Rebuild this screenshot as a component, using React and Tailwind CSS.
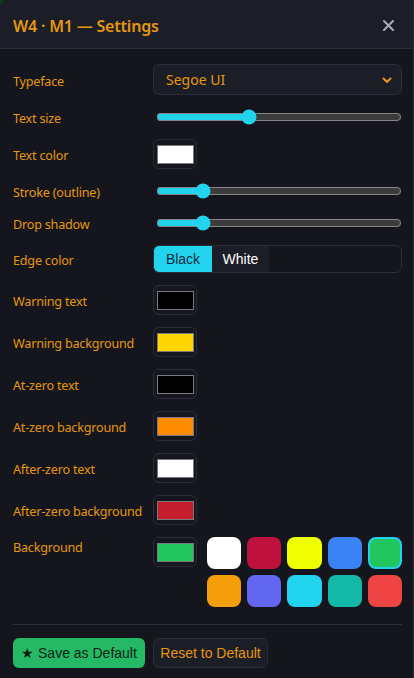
import React, { useState } from 'react';

const colorRows = [
  ['Text color', '#ffffff'],
];

const pickerRows = [
  ['Warning text', '#000000'],
  ['Warning background', '#ffd600'],
  ['At-zero text', '#000000'],
  ['At-zero background', '#ff8c00'],
  ['After-zero text', '#ffffff'],
  ['After-zero background', '#c41e2e'],
];

const swatches = [
  '#ffffff', '#be123c', '#f0ff00', '#3b82f6', '#22c55e',
  '#f59e0b', '#6366f1', '#22d3ee', '#14b8a6', '#ef4444',
];

const ColorBox = ({ color }) => (
  <div className="w-[44px] h-[30px] rounded-md border border-[#2a2d38] bg-[#16171e] flex items-center justify-center">
    <div className="w-[37px] h-[19px] border border-[#7a7a7a]" style={{ background: color }} />
  </div>
);

const Label = ({ children, top }) => (
  <div className={`text-[12.6px] leading-[14px] tracking-[-0.2px] text-[#e6960f] ${top ? 'self-start pt-[4px]' : 'pt-[4px]'}`}>{children}</div>
);

const Slider = ({ value }) => (
  <div className="h-[20px] flex items-center pl-[3px]">
    <input
      type="range"
      min="0"
      max="100"
      defaultValue={value}
      className="w-full accent-[#22d3ee] m-0"
    />
  </div>
);

export default function App() {
  const [edge, setEdge] = useState('black');
  const [bg, setBg] = useState('#22c55e');

  return (
    <div className="min-h-[678px] bg-[#0f3a1e]" style={{ fontFamily: '"Noto Sans", "Open Sans", sans-serif' }}>
      <div className="w-[414px] h-[678px] rounded-tl-lg border-r border-[#2a2d38] bg-[#15161d] overflow-hidden">
        {/* header */}
        <div className="h-[49px] flex items-center justify-between pl-[13px] pr-[19px] pt-[3px] bg-[#1b1e27] border-b border-[#2c303b]">
          <h2 className="text-[16px] font-semibold text-[#e6960f] tracking-[-0.2px]">W4 · M1 — Settings</h2>
          <button className="text-[#a7adb8]">
            <svg width="11" height="11" viewBox="0 0 11 11">
              <path d="M1 1 L10 10 M10 1 L1 10" stroke="#a7adb8" strokeWidth="2" strokeLinecap="round" />
            </svg>
          </button>
        </div>

        {/* body */}
        <div className="pt-[15px] pr-[11px] pl-[13px]">
          <div className="grid grid-cols-[140px_1fr] gap-y-[12px] items-center">
            <Label>Typeface</Label>
            <div className="h-[31px] rounded-md border border-[#2a2d38] bg-[#1b1e27] flex items-center justify-between pl-[12px] pr-[8px]">
              <span className="text-[14px] text-[#e6960f]">Segoe UI</span>
              <svg width="12" height="12" viewBox="0 0 12 12" fill="none">
                <path d="M2.5 4.5 L6 8 L9.5 4.5" stroke="#e6960f" strokeWidth="2" strokeLinecap="round" strokeLinejoin="round" />
              </svg>
            </div>

            <Label>Text size</Label>
            <Slider value={37} />

            {colorRows.map(([l, c]) => (
              <React.Fragment key={l}>
                <Label>{l}</Label>
                <ColorBox color={c} />
              </React.Fragment>
            ))}

            <Label>Stroke (outline)</Label>
            <Slider value={17} />

            <Label>Drop shadow</Label>
            <Slider value={17} />

            <Label>Edge color</Label>
            <div className="h-[28px] rounded-md border border-[#2a2d38] overflow-hidden flex" style={{ fontFamily: '"Liberation Sans", Arial, sans-serif' }}>
              <button
                onClick={() => setEdge('black')}
                className={`w-[58px] text-[14px] ${edge === 'black' ? 'bg-[#22d3ee] text-[#0f2a3a]' : 'bg-[#1b1e27] text-white'}`}
              >
                Black
              </button>
              <button
                onClick={() => setEdge('white')}
                className={`w-[57px] text-[14px] ${edge === 'white' ? 'bg-[#22d3ee] text-[#0f2a3a]' : 'bg-[#1b1e27] text-white'}`}
              >
                White
              </button>
            </div>

            {pickerRows.map(([l, c]) => (
              <React.Fragment key={l}>
                <Label>{l}</Label>
                <ColorBox color={c} />
              </React.Fragment>
            ))}

            <Label top>Background</Label>
            <div className="flex items-start gap-[10px]">
              <ColorBox color={bg} />
              <div className="grid grid-cols-5 gap-x-[6px] gap-y-[6px] flex-1">
                {swatches.map((s) => (
                  <button
                    key={s}
                    onClick={() => setBg(s)}
                    className={`h-[32px] rounded-lg ${bg === s ? 'border-2 border-[#22d3ee]' : ''}`}
                    style={{ background: s }}
                  />
                ))}
              </div>
            </div>
          </div>

          {/* footer */}
          <div className="mt-[17px] pt-[13px] border-t border-[#2c303b] flex gap-[8px]" style={{ fontFamily: '"Liberation Sans", Arial, sans-serif' }}>
            <button className="h-[30px] w-[132px] rounded-md bg-[#25b865] text-[#0c1f14] text-[14px]">
              ★ Save as Default
            </button>
            <button className="h-[30px] w-[115px] rounded-md bg-[#1b1e27] border border-[#2a2d38] text-[#e6960f] text-[14px]">
              Reset to Default
            </button>
          </div>
        </div>
      </div>
    </div>
  );
}
